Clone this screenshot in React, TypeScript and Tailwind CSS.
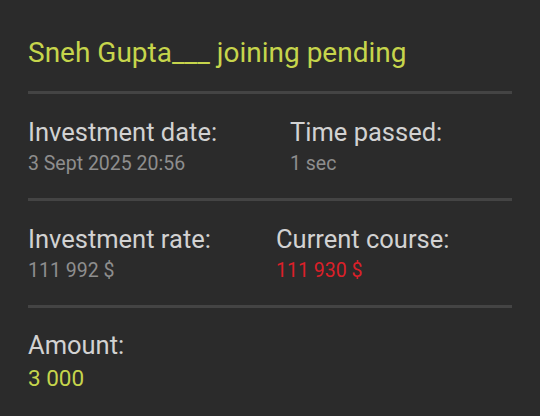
import React from 'react';

const Divider = () => <div className="h-[3px] bg-[#444444] mx-[28px]" />;

const Field = ({
  label,
  value,
  valueClass,
}: {
  label: string;
  value: string;
  valueClass: string;
}) => (
  <div className="flex flex-col gap-[5px]">
    <span className="text-[25.5px] leading-[30px] text-[#d2d2d2]">{label}</span>
    <span className={valueClass}>{value}</span>
  </div>
);

export default function App() {
  return (
    <div
      className="w-[540px] h-[416px] bg-[#2b2b2b] overflow-hidden"
      style={{ fontFamily: 'Roboto, "Liberation Sans", sans-serif' }}
    >
      <div className="px-[28px] pt-[36px] pb-[21px]">
        <h1 className="text-[28px] leading-[34px] text-[#c6d54c] font-normal">Sneh Gupta___ joining pending</h1>
      </div>
      <Divider />
      <div className="flex px-[28px] pt-[23px] pb-[22px]">
        <div className="w-[262px] shrink-0">
          <Field label="Investment date:" value="3 Sept 2025 20:56" valueClass="text-[19.5px] leading-[24px] text-[#8e8e8e]" />
        </div>
        <Field label="Time passed:" value="1 sec" valueClass="text-[19.5px] leading-[24px] text-[#8e8e8e]" />
      </div>
      <Divider />
      <div className="flex px-[28px] pt-[23px] pb-[22px]">
        <div className="w-[248px] shrink-0">
          <Field label="Investment rate:" value="111 992 $" valueClass="text-[19.5px] leading-[24px] text-[#8e8e8e]" />
        </div>
        <Field label="Current course:" value="111 930 $" valueClass="text-[19.5px] leading-[24px] text-[#dc2029]" />
      </div>
      <Divider />
      <div className="px-[28px] pt-[22px]">
        <Field label="Amount:" value="3 000" valueClass="text-[22.5px] leading-[26px] text-[#c6d54c]" />
      </div>
    </div>
  );
}
